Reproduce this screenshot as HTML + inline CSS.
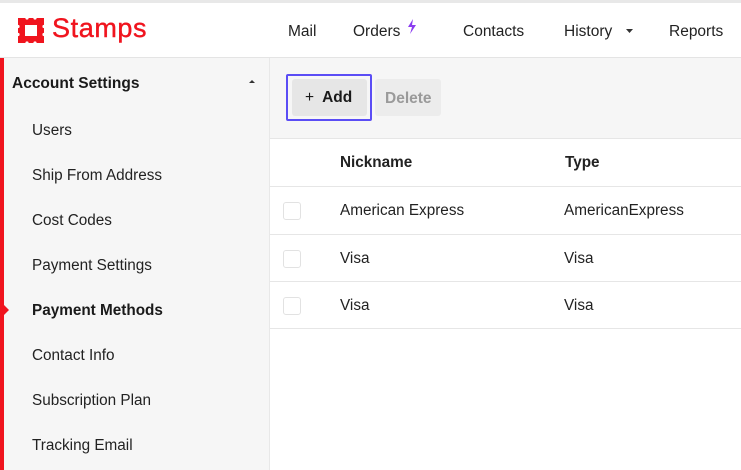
<!DOCTYPE html>
<html><head><style>
*{margin:0;padding:0;box-sizing:border-box}
body{width:741px;height:470px;overflow:hidden;background:#fff;font-family:"Liberation Sans",sans-serif;color:#1a1a1a;position:relative}
.a{position:absolute;white-space:nowrap}
.nav{font-size:15.5px;top:23px;color:#222}
.side{font-size:15.3px;left:32px;color:#222}
.cb{position:absolute;left:283px;width:18px;height:18px;border:1px solid #e2e2e2;border-radius:3px;background:#fff}
.td{font-size:15.3px;color:#222}
.hr{position:absolute;left:270px;right:0;height:1px;background:#e6e6e6}
</style></head><body>
<div class="a" style="left:0;top:0;width:741px;height:3px;background:#e8e8e8"></div>
<div class="a" style="left:0;top:57px;width:741px;height:1px;background:#e4e4e4"></div>
<svg class="a" style="left:18px;top:18px" width="26" height="25" viewBox="0 0 26 25">
<rect x="0" y="0" width="26" height="25" fill="#f0141e"/>
<rect x="7" y="7" width="12" height="11" fill="#fff"/>
<circle cx="9" cy="0" r="1.6" fill="#fff"/><circle cx="17" cy="0" r="1.6" fill="#fff"/>
<circle cx="9" cy="25" r="1.6" fill="#fff"/><circle cx="17" cy="25" r="1.6" fill="#fff"/>
<circle cx="0" cy="8.5" r="1.6" fill="#fff"/><circle cx="0" cy="16.5" r="1.6" fill="#fff"/>
<circle cx="26" cy="8.5" r="1.6" fill="#fff"/><circle cx="26" cy="16.5" r="1.6" fill="#fff"/>
</svg>
<div class="a" style="left:52px;top:13px;font-size:27px;color:#f0141e;letter-spacing:0.6px;-webkit-text-stroke:0.4px #f0141e">Stamps</div>
<div class="a nav" style="left:288px">Mail</div>
<div class="a nav" style="left:353px">Orders</div>
<svg class="a" style="left:407px;top:19px" width="10" height="15" viewBox="0 0 10 15"><path d="M6 0 L1 8 H5 L3 15 L9 6 H5 Z" fill="#8a3cf0"/></svg>
<div class="a nav" style="left:463px">Contacts</div>
<div class="a nav" style="left:564px">History</div>
<svg class="a" style="left:626px;top:29px" width="7" height="4"><path d="M0 0H7L3.5 4Z" fill="#333"/></svg>
<div class="a nav" style="left:669px">Reports</div>
<div class="a" style="left:0;top:58px;width:270px;height:412px;background:#f6f6f6;border-right:1px solid #e8e8e8"></div>
<div class="a" style="left:0;top:58px;width:4px;height:412px;background:#f0141e"></div>
<svg class="a" style="left:4px;top:305px" width="5" height="10"><path d="M0 0L5 5L0 10Z" fill="#f0141e"/></svg>
<div class="a" style="left:12px;top:75px;font-size:15.5px;font-weight:bold;color:#1a1a1a">Account Settings</div>
<svg class="a" style="left:249px;top:80px" width="6" height="3"><path d="M0 3H6L3 0Z" fill="#333"/></svg>
<div class="a side" style="top:122px">Users</div>
<div class="a side" style="top:167px">Ship From Address</div>
<div class="a side" style="top:212px">Cost Codes</div>
<div class="a side" style="top:257px">Payment Settings</div>
<div class="a side" style="top:302px;font-weight:bold;color:#1a1a1a">Payment Methods</div>
<div class="a side" style="top:347px">Contact Info</div>
<div class="a side" style="top:392px">Subscription Plan</div>
<div class="a side" style="top:437px">Tracking Email</div>
<div class="a" style="left:270px;top:58px;width:471px;height:80px;background:#f6f6f6"></div>
<div class="a" style="left:286px;top:74px;width:86px;height:47px;border:2px solid #5b4df5;border-radius:2px"></div>
<div class="a" style="left:292px;top:79px;width:75px;height:37px;background:#e6e6e6;border-radius:3px"></div>
<div class="a" style="left:305px;top:89px;font-size:15.5px;font-weight:bold;color:#1a1a1a"><span style="font-weight:normal">+</span>&nbsp; Add</div>
<div class="a" style="left:375px;top:79px;width:66px;height:37px;background:#ececec;border-radius:3px"></div>
<div class="a" style="left:385px;top:90px;font-size:15.5px;font-weight:bold;color:#9a9a9a">Delete</div>
<div class="hr" style="top:138px"></div>
<div class="a td" style="left:340px;top:154px;font-weight:bold">Nickname</div>
<div class="a td" style="left:565px;top:154px;font-weight:bold">Type</div>
<div class="hr" style="top:186px"></div>
<div class="cb" style="top:202px"></div>
<div class="a td" style="left:340px;top:202px">American Express</div>
<div class="a td" style="left:564px;top:202px">AmericanExpress</div>
<div class="hr" style="top:234px"></div>
<div class="cb" style="top:250px"></div>
<div class="a td" style="left:340px;top:250px">Visa</div>
<div class="a td" style="left:564px;top:250px">Visa</div>
<div class="hr" style="top:281px"></div>
<div class="cb" style="top:297px"></div>
<div class="a td" style="left:340px;top:297px">Visa</div>
<div class="a td" style="left:564px;top:297px">Visa</div>
<div class="hr" style="top:328px"></div>
</body></html>
